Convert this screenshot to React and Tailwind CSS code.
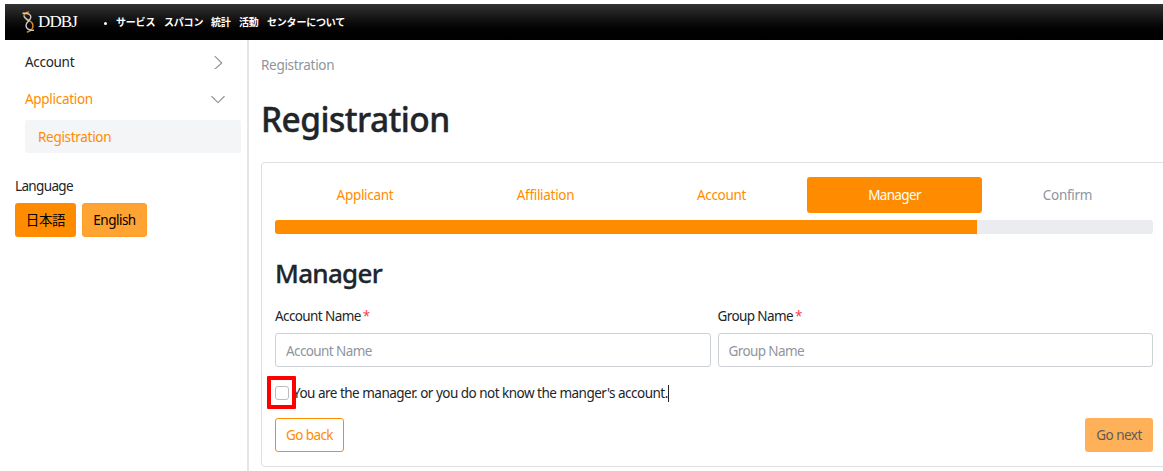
import React from 'react';

const steps = [
  { label: 'Applicant', box: 'w-[180px] text-[#ff8c00]' },
  { label: 'Affiliation', box: 'w-[181px] text-[#ff8c00]' },
  { label: 'Account', box: 'w-[171px] text-[#ff8c00]' },
  { label: 'Manager', box: 'w-[175px] rounded-[3px] bg-[#ff8c00] text-white tracking-[-0.65px]' },
  { label: 'Confirm', box: 'w-[171px] text-[#8f959e]' },
];

const navItems = [
  { label: 'サービス', box: 'w-[48px]' },
  { label: 'スパコン', box: 'w-[47px]' },
  { label: '統計', box: 'w-[28px]' },
  { label: '活動', box: 'w-[28px]' },
  { label: 'センターについて', box: 'w-[80px]' },
];

function Helix() {
  return (
    <svg className="h-[22px] w-[13px]" viewBox="0 0 13 22" fill="none" strokeLinecap="round">
      <path d="M6.5 1C3.5 1.5 1.8 3 2 5C2.3 8 9.8 9.5 10.8 13.5C11.5 17 9 19.8 5.5 21" stroke="#d98a1c" strokeWidth="1.5" />
      <path d="M1 2.2C6 2 9.2 3.5 8.8 6.5C8.4 9.5 4 11 4 14.5C4 17.5 7 19.6 11.5 19.3" stroke="#d0d0d0" strokeWidth="1.4" />
      <path d="M2.3 5.5C3 8 5 9 7 10" stroke="#c4c4c4" strokeWidth="1.1" />
    </svg>
  );
}

function Chevron({ down }) {
  return (
    <svg className="size-[14px]" viewBox="0 0 14 14" fill="none" stroke="#8f949b" strokeWidth="1.1" strokeLinecap="round" strokeLinejoin="round">
      <path d={down ? 'M.8 4.5L7 10.7L13.2 4.5' : 'M4 1.3L10.7 8L4 14'} />
    </svg>
  );
}

function Field({ label }) {
  return (
    <div className="flex-1">
      <div className="flex h-[20px] items-center tracking-[-0.6px]">
        {label}
        <span className="ml-[2px] text-[#fa3e4e]">*</span>
      </div>
      <input
        className="mt-[7px] block h-[34px] w-full rounded-[3px] border border-[#cdd0d4] px-[10px] pt-[2px] tracking-[-0.6px] placeholder:text-[#8f959e]"
        placeholder={label}
      />
    </div>
  );
}

export default function App() {
  return (
    <div className="h-[471px] w-[1163px] overflow-hidden bg-white pt-[4px] pl-[5px] font-['Noto_Sans','Noto_Sans_CJK_JP',sans-serif] text-[13.5px] leading-[20px] tracking-[-0.3px] text-[#212529]">
      <header className="flex h-[36px] items-center bg-linear-to-b from-[#333333] to-black pl-[17px] text-white">
        <Helix />
        <span className="ml-[3px] w-[41px] font-['Liberation_Serif',serif] text-[17px] tracking-[-0.9px]">DDBJ</span>
        <span className="mt-[2px] ml-[25px] size-[3px] rounded-full bg-white" />
        <nav className="ml-[9px] flex font-['Noto_Sans_CJK_JP',sans-serif] text-[10px] font-bold tracking-[-0.2px]">
          {navItems.map((item) => (
            <span key={item.label} className={`${item.box} whitespace-nowrap`}>{item.label}</span>
          ))}
        </nav>
      </header>

      <div className="flex">
        <aside className="h-[431px] w-[244px] shrink-0 border-r-2 border-[#e3e5e8] pt-[12px]">
          <div className="flex h-[20px] items-center justify-between pr-[22px] pl-[20px]">
            Account
            <Chevron />
          </div>
          <div className="mt-[17px] flex h-[20px] items-center justify-between pr-[22px] pl-[20px] text-[#ff8c00]">
            Application
            <Chevron down />
          </div>
          <div className="mt-[11px] mr-[6px] ml-[20px] flex h-[33px] items-center rounded-[3px] bg-[#f4f5f7] pl-[13px] text-[#ff8c00]">
            Registration
          </div>
          <div className="mt-[23px] pl-[10px] tracking-[-0.65px]">Language</div>
          <div className="mt-[7px] flex gap-[6px] pl-[10px] text-black">
            <button className="h-[34px] w-[61px] rounded-[3px] bg-[#ff8c00] tracking-[-0.4px]">日本語</button>
            <button className="h-[34px] w-[65px] rounded-[3px] border border-[#ff9d26] bg-[#ffa333] tracking-[-0.5px]">English</button>
          </div>
        </aside>

        <main className="w-[920px] shrink-0 pt-[15px] pl-[12px]">
          <div className="text-[#8f959e]">Registration</div>
          <h1 className="mt-[23px] text-[33.5px] leading-[42px] font-medium tracking-[-0.55px] [-webkit-text-stroke:0.4px_#212529]">Registration</h1>

          <section className="mt-[22px] h-[305px] w-[906px] rounded-[4px] border border-[#dddfe2] px-[13px] pt-[14px]">
            <div className="flex h-[36px] w-[878px]">
              {steps.map((step) => (
                <div key={step.label} className={`${step.box} flex items-center justify-center`}>{step.label}</div>
              ))}
            </div>
            <div className="mt-[7px] h-[14px] w-[878px] overflow-hidden rounded-[3px] bg-[#ebecf0]">
              <div className="h-full w-4/5 bg-[#ff8c00]" />
            </div>
            <h2 className="mt-[22px] text-[26px] leading-[34px] font-medium tracking-[-0.7px] [-webkit-text-stroke:0.3px_#212529]">Manager</h2>
            <div className="mt-[16px] flex w-[878px] gap-[7px]">
              <Field label="Account Name" />
              <Field label="Group Name" />
            </div>
            <div className="relative mt-[16px] flex h-[20px] w-[394px] items-center">
              <span className="size-[14px] shrink-0 rounded-[3px] border border-[#b9bcc0]" />
              <span className="ml-[4px] whitespace-nowrap tracking-[-0.51px]">You are the manager. or you do not know the manger's account.</span>
              <span className="ml-auto h-[17px] w-px shrink-0 bg-[#212529]" />
              <span className="absolute top-[-7px] left-[-8px] h-[33px] w-[29px] rounded-[1px] border-4 border-[#ff0000]" />
            </div>
            <div className="mt-[15px] flex w-[878px] justify-between">
              <button className="h-[34px] w-[69px] rounded-[3px] border border-[#ff8c00] tracking-[-0.6px] text-[#ff8c00]">Go back</button>
              <button className="h-[34px] w-[68px] rounded-[3px] bg-[#ffb159] tracking-[-0.5px] text-[#5f5b55]">Go next</button>
            </div>
          </section>
        </main>
      </div>
    </div>
  );
}
